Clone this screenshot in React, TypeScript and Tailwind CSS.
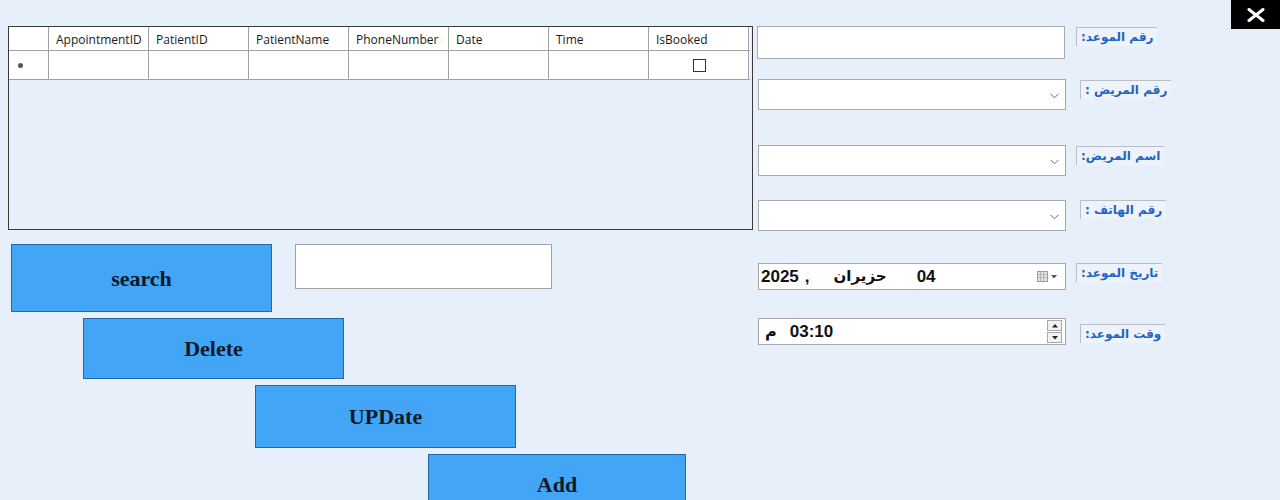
import React from "react";

const cols = ["AppointmentID", "PatientID", "PatientName", "PhoneNumber", "Date", "Time", "IsBooked"];

function Chevron() {
  return (
    <svg width="9" height="6" viewBox="0 0 9 6" className="mr-[6px] mt-[2px]">
      <path d="M0.5 0.8 L4.5 4.8 L8.5 0.8" fill="none" stroke="#6b6b6b" strokeWidth="1" />
    </svg>
  );
}

function Label({ text, mt }: { text: string; mt: string }) {
  return (
    <div
      className={`${mt} h-[19px] px-[4px] flex items-center bg-[#eef3fb] border-l border-t border-[#b9bec6] text-[#1f64c8] text-[12px] font-bold whitespace-nowrap`}
      style={{ fontFamily: '"DejaVu Sans", sans-serif' }}
      dir="rtl"
    >
      {text}
    </div>
  );
}

function Combo({ h }: { h: string }) {
  return (
    <div className={`w-[308px] ${h} bg-white border border-[#a9a9a9] flex items-center justify-end`}>
      <Chevron />
    </div>
  );
}

function Btn({ text, cls }: { text: string; cls: string }) {
  return (
    <div
      className={`${cls} bg-[#42a5f5] border border-[#2566a8] flex items-center justify-center text-[22px] font-bold text-[#0f1a28] shrink-0`}
      style={{ fontFamily: '"Liberation Serif", serif' }}
    >
      {text}
    </div>
  );
}

export default function App() {
  return (
    <div className="relative w-[1280px] h-[500px] overflow-hidden bg-[#e7effa] flex" style={{ fontFamily: '"Open Sans", sans-serif' }}>
      {/* Left column */}
      <div className="pl-[8px] pt-[26px] w-[757px] shrink-0 flex flex-col">
        <div className="w-[745px] h-[204px] shrink-0 border border-[#3a3a3a] bg-[#e7effa] flex flex-col">
          <div className="flex h-[24px] shrink-0 bg-white border-b border-[#a0a0a0] w-[741px]">
            <div className="w-[40px] border-r border-[#a0a0a0]" />
            {cols.map((c) => (
              <div key={c} className="w-[100px] border-r border-[#a0a0a0] pl-[7px] pt-[2px] flex items-center text-[12px] text-[#1a1a1a]">
                {c}
              </div>
            ))}
          </div>
          <div className="flex h-[29px] shrink-0 bg-white border-b border-[#a0a0a0] w-[741px]">
            <div className="w-[40px] border-r border-[#a0a0a0] flex items-center pl-[9px]">
              <div className="w-[5px] h-[5px] rounded-full bg-[#555]" />
            </div>
            {cols.map((c, i) => (
              <div key={c} className="w-[100px] border-r border-[#a0a0a0] flex items-center justify-center">
                {i === 6 && <div className="w-[13px] h-[13px] border border-[#333] bg-white ml-[1px]" />}
              </div>
            ))}
          </div>
        </div>

        <div className="flex mt-[14px] shrink-0">
          <Btn text="search" cls="ml-[3px] w-[261px] h-[68px]" />
          <div className="ml-[23px] w-[257px] h-[45px] bg-white border border-[#a0a0a0]" />
        </div>
        <Btn text="Delete" cls="mt-[6px] ml-[75px] w-[261px] h-[61px]" />
        <Btn text="UPDate" cls="mt-[6px] ml-[247px] w-[261px] h-[63px]" />
        <Btn text="Add" cls="mt-[6px] ml-[420px] w-[258px] h-[60px]" />
      </div>

      {/* Right column */}
      <div className="flex flex-col">
        <div className="flex items-start mt-[26px]">
          <div className="w-[308px] h-[33px] bg-white border border-[#a9a9a9]" />
          <div className="ml-[11px]"><Label text="رقم الموعد:" mt="mt-[1px]" /></div>
        </div>
        <div className="flex items-start mt-[20px] ml-[1px]">
          <Combo h="h-[31px]" />
          <div className="ml-[14px]"><Label text="رقم المريض :" mt="mt-[1px]" /></div>
        </div>
        <div className="flex items-start mt-[35px] ml-[1px]">
          <Combo h="h-[31px]" />
          <div className="ml-[10px]"><Label text="اسم المريض:" mt="mt-[1px]" /></div>
        </div>
        <div className="flex items-start mt-[24px] ml-[1px]">
          <Combo h="h-[31px]" />
          <div className="ml-[14px]"><Label text="رقم الهاتف :" mt="mt-[0px]" /></div>
        </div>
        <div className="flex items-start mt-[32px] ml-[1px]">
          <div
            className="w-[308px] h-[27px] bg-white border border-[#a9a9a9] flex items-center text-[17px] font-bold text-[#111]"
            style={{ fontFamily: '"Liberation Sans", "DejaVu Sans", sans-serif' }}
          >
            <span className="ml-[2px]">2025</span>
            <span className="ml-[6px]">,</span>
            <span className="ml-[24px] text-[15px] leading-none" style={{ fontFamily: '"DejaVu Sans", sans-serif' }} dir="rtl">حزيران</span>
            <span className="ml-[30px]">04</span>
            <div className="ml-auto mr-[8px] flex items-center gap-[3px]">
              <svg width="11" height="11" viewBox="0 0 11 11">
                <rect x="0.5" y="0.5" width="10" height="10" fill="#e4e4e4" stroke="#9a9a9a" />
                <path d="M0.5 3.5 H10.5 M0.5 6.5 H10.5 M3.5 0.5 V10.5 M6.5 0.5 V10.5" stroke="#b5b5b5" strokeWidth="1" />
              </svg>
              <svg width="6" height="4" viewBox="0 0 6 4">
                <path d="M0 0 H6 L3 3.5 Z" fill="#555" />
              </svg>
            </div>
          </div>
          <div className="ml-[10px]"><Label text="تاريخ الموعد:" mt="mt-[0px]" /></div>
        </div>
        <div className="flex items-start mt-[28px] ml-[1px]">
          <div
            className="w-[308px] h-[27px] bg-white border border-[#a9a9a9] flex items-center text-[17px] font-bold text-[#111]"
            style={{ fontFamily: '"Liberation Sans", "DejaVu Sans", sans-serif' }}
          >
            <span className="ml-[6px] text-[16px]" style={{ fontFamily: '"DejaVu Sans", sans-serif' }}>م</span>
            <span className="ml-[13px]">03:10</span>
            <div className="ml-auto mr-[3px] flex flex-col gap-[1px]">
              <div className="w-[15px] h-[11px] bg-[#f2f2f2] border border-[#a9a9a9] flex items-center justify-center">
                <svg width="6" height="4" viewBox="0 0 6 4"><path d="M0 3.5 H6 L3 0 Z" fill="#222" /></svg>
              </div>
              <div className="w-[15px] h-[11px] bg-[#f2f2f2] border border-[#a9a9a9] flex items-center justify-center">
                <svg width="6" height="4" viewBox="0 0 6 4"><path d="M0 0 H6 L3 3.5 Z" fill="#222" /></svg>
              </div>
            </div>
          </div>
          <div className="ml-[14px]"><Label text="وقت الموعد:" mt="mt-[6px]" /></div>
        </div>
      </div>

      {/* Close button */}
      <div className="absolute right-0 top-0 w-[49px] h-[29px] bg-black flex items-center justify-center">
        <svg width="20" height="14" viewBox="0 0 20 14">
          <path d="M3 1.5 L17 12.5 M17 1.5 L3 12.5" stroke="white" strokeWidth="3" strokeLinecap="round" />
        </svg>
      </div>
    </div>
  );
}
